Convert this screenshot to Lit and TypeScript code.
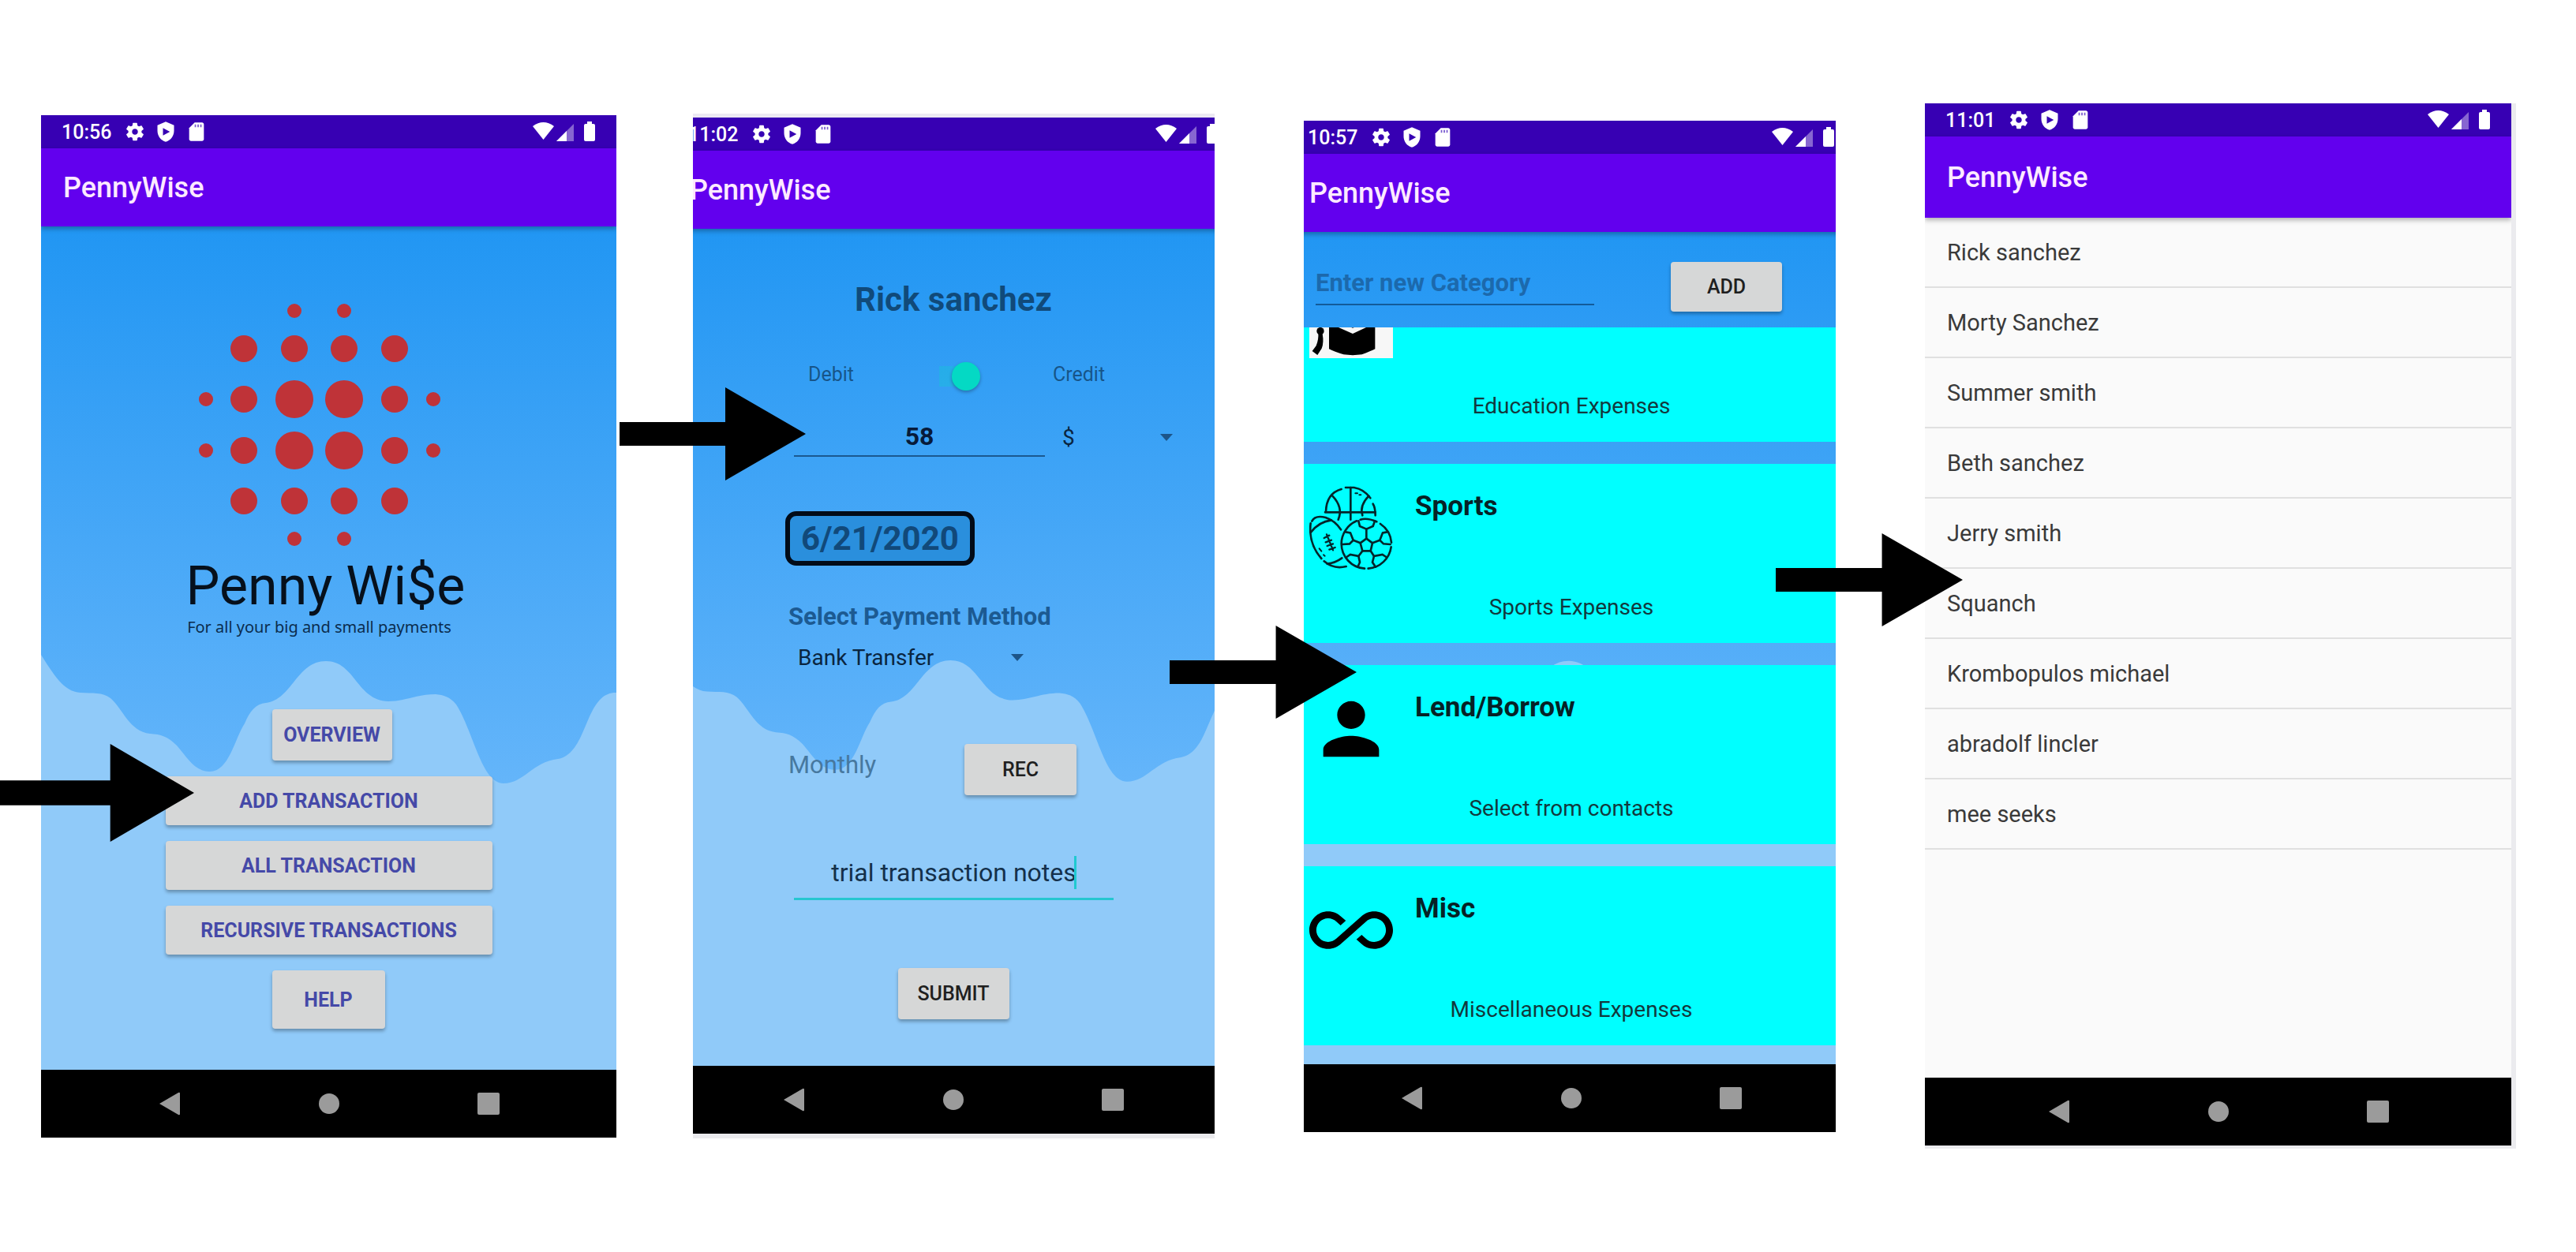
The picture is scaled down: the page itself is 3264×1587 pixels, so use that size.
import { LitElement, html, css, svg } from "lit";
import { customElement, property } from "lit/decorators.js";

interface Category {
  title: string;
  note: string;
  icon: unknown;
}

const educationIcon = html`<svg class="icon cap" viewBox="0 0 318 243" aria-hidden="true">
  <rect width="318" height="243" fill="#f7f7f7" />
  <path d="M165 15 310 72 165 128 20 72Z" />
  <path d="M75 110 165 150 250 110V208Q235 216 200 229Q165 234 130 229Q95 218 75 208Z" />
  <path d="M40 72h4v58h-4z" />
  <circle cx="42" cy="140" r="14" />
  <path d="M34 148 50 150Q56 185 47 206L31 231 11 216 26 196Q36 172 34 148Z" />
</svg>`;

const sportsIcon = html`<svg class="icon" viewBox="30 30 318 318" fill="none" stroke="#04262b" stroke-width="8" stroke-linecap="round" aria-hidden="true">
  <path d="M93 128Q95 58 152 42M168 36H200Q238 42 262 76M272 98Q281 112 281 142" />
  <path d="M90 130H281M187 36V158" />
  <path d="M118 68Q160 112 140 158M256 68Q220 105 232 142" />
  <path d="M205 58h8M220 64h6" stroke-width="6" />
  <path d="M152 250A95 95 0 0 1 210 163M224 158Q250 150 286 166M300 174A95 95 0 0 1 342 245M341 262A95 95 0 0 1 254 344M240 344A95 95 0 0 1 152 250" />
  <path d="M247 230 270 247 263 277H232L224 247Z" />
  <path d="M247 230V194M224 247 197 236M270 247 298 236M232 277 217 297M263 277 276 297" />
  <path d="M217 163 222 183 247 194 272 183 279 163" />
  <path d="M168 205 186 208 197 236 183 250 156 252M326 205 309 208 298 236 312 250 338 252" />
  <path d="M172 300 186 291 217 297 222 320 214 338M322 300 308 291 276 297 270 320 282 338" />
  <path d="M40 164Q52 140 92 150Q128 162 150 196M35 172Q26 250 76 306M86 316Q122 348 170 336" />
  <path d="M36 206Q66 166 114 160M98 326Q130 322 154 304" />
  <path d="M96 214 120 274M86 228 106 218M92 244 114 236M98 258 120 250M106 272 128 264" stroke-width="7" />
  <path d="M68 268l8 10M84 292l5 4" stroke-width="6" />
</svg>`;

const personIcon = html`<svg class="icon" viewBox="0 0 24 24" aria-hidden="true">
  <path d="M12 12c2.21 0 4-1.79 4-4s-1.79-4-4-4-4 1.79-4 4 1.79 4 4 4zm0 2c-2.67 0-8 1.34-8 4v2h16v-2c0-2.66-5.33-4-8-4z" />
</svg>`;

const infinityIcon = html`<svg class="icon" viewBox="0 0 24 24" aria-hidden="true">
  <path d="M18.6 6.62c-1.44 0-2.8.56-3.77 1.53L12 10.66 10.48 12h.01L7.8 14.39c-.64.64-1.49.99-2.4.99-1.87 0-3.39-1.51-3.39-3.38S3.53 8.62 5.4 8.62c.91 0 1.76.35 2.44 1.03l1.13 1 1.51-1.34L9.22 8.2C8.2 7.18 6.84 6.62 5.4 6.62 2.42 6.62 0 9.04 0 12s2.42 5.38 5.4 5.38c1.44 0 2.8-.56 3.77-1.53l2.83-2.5.01.01L13.52 12h-.01l2.69-2.39c.64-.64 1.49-.99 2.4-.99 1.87 0 3.39 1.51 3.39 3.38s-1.52 3.38-3.39 3.38c-.9 0-1.76-.35-2.44-1.03l-1.14-1.01-1.51 1.34 1.27 1.12c1.02 1.01 2.37 1.57 3.82 1.57 2.98 0 5.4-2.41 5.4-5.38s-2.42-5.37-5.4-5.37z" />
</svg>`;

const categories: Category[] = [
  { title: "", note: "Education Expenses", icon: educationIcon },
  { title: "Sports", note: "Sports Expenses", icon: sportsIcon },
  { title: "Lend/Borrow", note: "Select from contacts", icon: personIcon },
  { title: "Misc", note: "Miscellaneous Expenses", icon: infinityIcon },
];

const contacts = [
  "Rick sanchez",
  "Morty Sanchez",
  "Summer smith",
  "Beth sanchez",
  "Jerry smith",
  "Squanch",
  "Krombopulos michael",
  "abradolf lincler",
  "mee seeks",
];

/* Dots of the brand mark: x, y, radius. */
const dots: [number, number, number][] = [
  [373, 394, 9], [436, 394, 9],
  [309, 442, 17], [373, 442, 17], [436, 442, 17], [500, 442, 17],
  [261, 506, 9], [309, 506, 17], [373, 506, 24], [436, 506, 24], [500, 506, 17], [549, 506, 9],
  [261, 571, 9], [309, 571, 17], [373, 571, 24], [436, 571, 24], [500, 571, 17], [549, 571, 9],
  [309, 635, 17], [373, 635, 17], [436, 635, 17], [500, 635, 17],
  [373, 683, 9], [436, 683, 9],
];

/* Phone chrome: status bar, app bar, slotted screen and navigation bar. */
@customElement("phone-frame")
export class PhoneFrame extends LitElement {
  @property() time = "";
  @property({ type: Boolean }) wave = false;

  static styles = css`
    :host {
      display: block;
      overflow: hidden;
      font-family: Roboto, "Liberation Sans", sans-serif;
    }
    .device {
      margin: 0 var(--crop-right, 0) 0 var(--crop-left, 0);
    }
    .status {
      display: flex;
      align-items: center;
      gap: 11px;
      height: 42px;
      padding: 0 26px;
      background: #3700b3;
      color: #fff;
      font-size: 25px;
      font-weight: 500;
    }
    .time {
      width: 68px;
    }
    .status-icon {
      width: 28px;
      height: 28px;
      fill: #fff;
    }
    .radio {
      width: 80px;
      height: 26px;
      margin-left: auto;
      fill: #fff;
    }
    .bar {
      position: relative;
      z-index: 1;
      display: flex;
      align-items: center;
      height: var(--bar-height, 99px);
      padding: 0 28px;
      background: #6200ee;
      color: #fdeaff;
      box-shadow: 0 3px 6px rgba(0, 0, 0, 0.3);
    }
    .title {
      margin: 0;
      font-size: 36px;
      font-weight: 500;
    }
    .screen {
      position: relative;
      background: #fafafa;
    }
    .screen.sky {
      background: linear-gradient(#2196f3, #64b5fa 66%);
    }
    .wave {
      position: absolute;
      inset: 0;
      width: 100%;
      height: 100%;
    }
    .content {
      position: relative;
    }
    .nav {
      display: grid;
      grid-template-columns: repeat(3, 202px);
      justify-content: center;
      justify-items: center;
      align-items: center;
      height: 86px;
      background: #000;
    }
    .nav-button {
      display: flex;
      padding: 8px;
      border: 0;
      background: none;
    }
    .nav-icon {
      width: 30px;
      height: 30px;
      fill: #9b9b9b;
    }
  `;

  render() {
    return html`
      <div class="device">
        <div class="status">
          <span class="time">${this.time}</span>
          <svg class="status-icon" viewBox="0 0 24 24" aria-hidden="true">
            <path d="M19.14 12.94c.04-.3.06-.61.06-.94 0-.32-.02-.64-.07-.94l2.03-1.58c.18-.14.23-.41.12-.61l-1.92-3.32c-.12-.22-.37-.29-.59-.22l-2.39.96c-.5-.38-1.03-.7-1.62-.94l-.36-2.54c-.04-.24-.24-.41-.48-.41h-3.84c-.24 0-.43.17-.47.41l-.36 2.54c-.59.24-1.13.57-1.62.94l-2.39-.96c-.22-.08-.47 0-.59.22L2.74 8.87c-.12.21-.08.47.12.61l2.03 1.58c-.05.3-.09.63-.09.94s.02.64.07.94l-2.03 1.58c-.18.14-.23.41-.12.61l1.92 3.32c.12.22.37.29.59.22l2.39-.96c.5.38 1.03.7 1.62.94l.36 2.54c.05.24.24.41.48.41h3.84c.24 0 .44-.17.47-.41l.36-2.54c.59-.24 1.13-.56 1.62-.94l2.39.96c.22.08.47 0 .59-.22l1.92-3.32c.12-.22.07-.47-.12-.61l-2.01-1.58zM12 15.2c-1.77 0-3.2-1.43-3.2-3.2s1.43-3.2 3.2-3.2 3.2 1.43 3.2 3.2-1.43 3.2-3.2 3.2z" />
          </svg>
          <svg class="status-icon" viewBox="0 0 24 24" aria-hidden="true">
            <path fill-rule="evenodd" d="M12 1 3 5v6c0 5.55 3.84 10.74 9 12 5.16-1.26 9-6.45 9-12V5zM9 8l7.500 4L9 16z" />
          </svg>
          <svg class="status-icon" viewBox="0 0 24 24" aria-hidden="true">
            <path d="M18 2h-8L4 8v12c0 1.100.9 2 2 2h12c1.100 0 2-.9 2-2V4c0-1.100-.9-2-2-2z" />
            <path d="M10 4h1.500v3H10zM13 4h1.500v3H13zM16 4h1.500v3H16z" fill="#7a5bd0" />
          </svg>
          <svg class="radio" viewBox="0 0 80 26" aria-hidden="true">
            <path d="M0 6Q13.500-4 27 6L13.500 23Z" />
            <path d="M30 25 52 3V25Z" opacity="0.4" />
            <path d="M30 25 43 12V25Z" />
            <rect x="69" width="6" height="5" />
            <rect x="65" y="3" width="14" height="22" rx="2" />
          </svg>
        </div>
        <header class="bar"><h2 class="title">PennyWise</h2></header>
        <div class="screen ${this.wave ? "sky" : ""}">
          ${this.wave
            ? html`<svg class="wave" viewBox="0 0 729 1069" preserveAspectRatio="none" aria-hidden="true">
                <path
                  fill="#90caf9"
                  d="M0 543C15 566 28 590 50 591C65 592 78 590 88 598C104 612 112 640 138 643C152 644 160 646 172 658C186 674 194 690 213 691C238 692 245 650 258 630C265 614 272 605 285 604C318 600 324 551 361 551C398 551 400 601 440 602C462 602 475 593 500 593C510 594 518 596 526 606C548 640 558 706 586 706C612 706 622 679 655 675C694 668 688 590 729 591V1069H0Z"
                />
              </svg>`
            : null}
          <div class="content"><slot></slot></div>
        </div>
        <nav class="nav">
          <button class="nav-button" aria-label="Back">
            <svg class="nav-icon" viewBox="0 0 30 30"><path d="M2 15 26 1Q28 0 28 2V28Q28 30 26 29Z" /></svg>
          </button>
          <button class="nav-button" aria-label="Home">
            <svg class="nav-icon" viewBox="0 0 30 30"><circle cx="15" cy="15" r="13" /></svg>
          </button>
          <button class="nav-button" aria-label="Recent apps">
            <svg class="nav-icon" viewBox="0 0 30 30"><rect x="1" y="1" width="28" height="28" rx="2" /></svg>
          </button>
        </nav>
      </div>
    `;
  }
}

@customElement("app-root")
export class AppRoot extends LitElement {
  static styles = css`
    :host {
      display: block;
      min-height: 100vh;
      overflow: hidden;
      background: #fff;
      font-family: Roboto, "Liberation Sans", sans-serif;
    }
    * {
      box-sizing: border-box;
    }
    button,
    input,
    select {
      font-family: inherit;
    }
    .board {
      display: grid;
      grid-template-columns:
        minmax(0, 52fr) minmax(0, 729fr) minmax(0, 97fr) minmax(0, 661fr) minmax(0, 113fr)
        minmax(0, 674fr) minmax(0, 113fr) minmax(0, 743fr) minmax(0, 82fr);
      align-items: start;
      padding-bottom: 130px;
    }
    .step {
      position: relative;
    }
    .step.home {
      grid-column: 2;
      margin-top: 146px;
    }
    .step.entry {
      grid-column: 4;
      margin-top: 144px;
      border-top: 5px solid #ece9f3;
      border-bottom: 6px solid #ebebee;
      --crop-left: -32px;
      --crop-right: -31px;
    }
    .step.category {
      grid-column: 6;
      margin-top: 153px;
      --crop-left: -21px;
      --crop-right: -25px;
    }
    .step.people {
      grid-column: 8;
      margin-top: 131px;
      border-right: 6px solid #ebebee;
      border-bottom: 4px solid #ebebee;
      margin-right: -6px;
      --bar-height: 103px;
    }

    /* Arrows lie over the screens they connect. */
    .arrow {
      position: absolute;
      z-index: 2;
    }
    .home .arrow {
      left: -52px;
      top: 797px;
      width: 246px;
      height: 124px;
    }
    .entry .arrow {
      left: -93px;
      top: 342px;
      width: 236px;
      height: 118px;
    }
    .category .arrow {
      left: -170px;
      top: 640px;
      width: 237px;
      height: 118px;
    }
    .people .arrow {
      left: -189px;
      top: 545px;
      width: 237px;
      height: 118px;
    }

    .raised {
      border: 0;
      border-radius: 4px;
      background: #d6d7d7;
      box-shadow: 0 3px 4px rgba(0, 0, 0, 0.3);
      color: #1f1f1f;
      font-size: 25px;
      font-weight: 500;
      text-align: center;
      padding: 0;
    }

    /* Home menu */
    .menu {
      display: flex;
      flex-direction: column;
      align-items: center;
      padding: 97px 0 52px;
    }
    .mark {
      width: 310px;
      height: 310px;
      margin-right: 24px;
      fill: #bf3338;
    }
    .brand {
      margin: 12px 8px 0 0;
      color: #06101c;
      font-size: 68px;
      font-weight: 400;
      line-height: 74px;
    }
    .tagline {
      margin: 0 24px 0 0;
      color: #0b2c4d;
      font-family: "Noto Sans", sans-serif;
      font-size: 20px;
      line-height: 30px;
    }
    .actions {
      display: grid;
      gap: 20px;
      width: 414px;
      margin-top: 89px;
    }
    .actions .raised {
      height: 62px;
      color: #4549a8;
      font-weight: 700;
    }
    .actions .overview {
      width: 152px;
      height: 65px;
      margin-left: 135px;
    }
    .actions .help {
      width: 143px;
      height: 74px;
      margin-left: 135px;
    }

    /* Transaction form */
    .form {
      display: flex;
      flex-direction: column;
      padding: 66px 149px 59px;
    }
    .payee {
      margin: 0;
      color: rgba(0, 20, 40, 0.6);
      font-size: 42px;
      font-weight: 700;
      line-height: 48px;
      text-align: center;
    }
    .kind {
      display: flex;
      align-items: center;
      height: 40px;
      margin: 50px 0 0 29px;
      color: rgba(0, 20, 40, 0.54);
      font-size: 25px;
    }
    .kind-name {
      width: 158px;
    }
    .toggle {
      position: relative;
      width: 56px;
      height: 36px;
      margin: 6px 92px 0 4px;
      appearance: none;
      background: linear-gradient(rgba(3, 218, 197, 0.25), rgba(3, 218, 197, 0.25)) 4px center / 46px 26px no-repeat;
    }
    .toggle::before {
      content: "";
      position: absolute;
      right: 0;
      width: 36px;
      height: 36px;
      border-radius: 50%;
      background: #04d9c4;
      box-shadow: 0 2px 4px rgba(0, 0, 0, 0.3);
    }
    .amount-row {
      display: flex;
      gap: 22px;
      height: 50px;
      margin: 35px 0 0 11px;
    }
    .amount {
      flex: none;
      width: 318px;
      padding: 0;
      border: 0;
      border-bottom: 2px solid rgba(0, 30, 60, 0.55);
      background: none;
      color: #071b3a;
      font-size: 32px;
      font-weight: 700;
      text-align: center;
    }
    .picker {
      display: grid;
      flex: none;
      align-items: center;
    }
    .picker > * {
      grid-area: 1 / 1;
    }
    .select {
      width: 100%;
      height: 100%;
      padding: 0;
      border: 0;
      appearance: none;
      background: none;
      color: #0a2540;
      font-size: 28px;
    }
    .caret {
      justify-self: end;
      width: 16px;
      height: 9px;
      fill: #1d5589;
      pointer-events: none;
    }
    .currency {
      width: 140px;
    }
    .date {
      align-self: flex-start;
      height: 69px;
      margin-top: 69px;
      padding: 0 14px;
      border: 6px solid #020b18;
      border-radius: 14px;
      background: #2a8fdd;
      color: #11497a;
      font-size: 42px;
      font-weight: 700;
    }
    .caption {
      margin: 45px 0 0 4px;
      color: #1c5a92;
      font-size: 31px;
      font-weight: 700;
      line-height: 40px;
      white-space: nowrap;
    }
    .method {
      width: 286px;
      height: 40px;
      margin: 11px 0 0 16px;
    }
    .repeat {
      display: flex;
      align-items: flex-start;
      justify-content: space-between;
      margin: 90px 57px 0 4px;
      color: #47789f;
      font-size: 31px;
      line-height: 54px;
    }
    .repeat .raised {
      width: 142px;
      height: 65px;
    }
    .notes-box {
      position: relative;
      margin: 66px 10px 0 11px;
    }
    .notes {
      display: block;
      width: 100%;
      height: 67px;
      padding: 0;
      border: 0;
      border-bottom: 3px solid #26c6d0;
      background: none;
      color: #14304a;
      font-size: 32px;
      text-align: center;
    }
    .cursor {
      position: absolute;
      right: 47px;
      top: 11px;
      width: 3px;
      height: 42px;
      background: #1fc9d0;
    }
    .submit {
      align-self: center;
      width: 141px;
      height: 65px;
      margin-top: 86px;
    }

    /* Categories */
    .new-category {
      display: flex;
      align-items: flex-start;
      justify-content: space-between;
      height: 121px;
      padding: 38px 93px 0 36px;
    }
    .category-name {
      width: 353px;
      height: 55px;
      padding: 0;
      border: 0;
      border-bottom: 2px solid rgba(0, 40, 80, 0.55);
      background: none;
      font-size: 31px;
      font-weight: 700;
    }
    .category-name::placeholder {
      color: #1c69ac;
      opacity: 1;
    }
    .new-category .raised {
      width: 141px;
      height: 63px;
    }
    .scroller {
      overflow: hidden;
    }
    .cards {
      display: grid;
      gap: 28px;
      margin: -82px 0 0;
      padding: 0 0 24px;
      list-style: none;
    }
    .card {
      display: grid;
      grid-template-columns: 106px 1fr;
      column-gap: 28px;
      align-content: start;
      height: 227px;
      padding: 28px 28px 0;
      background: #00ffff;
    }
    .icon {
      width: 106px;
      height: 106px;
    }
    .icon.cap {
      height: 81px;
      margin: 12px 0 13px;
    }
    .card-title {
      margin: 5px 0 0;
      color: #062226;
      font-size: 35px;
      font-weight: 700;
      line-height: 42px;
    }
    .card-note {
      grid-column: 1 / -1;
      margin: 30px 0 0;
      color: #12393d;
      font-size: 28px;
      line-height: 36px;
      text-align: center;
    }

    /* Contacts */
    .contacts {
      margin: 0;
      padding: 0 0 289px;
      list-style: none;
    }
    .contact {
      display: flex;
      align-items: center;
      height: 89px;
      padding: 0 28px;
      border-bottom: 2px solid #e0e0e0;
      color: #3a3a3a;
      font-size: 29px;
    }
  `;

  private arrow(head: number, thick: number) {
    return html`<svg class="arrow" viewBox="0 0 236 118" preserveAspectRatio="none" aria-hidden="true">
      <path d="M0 ${59 - thick / 2}H${head}V0L236 59 ${head} 118V${59 + thick / 2}H0Z" />
    </svg>`;
  }

  private caret() {
    return html`<svg class="caret" viewBox="0 0 16 9" aria-hidden="true"><path d="M0 0H16L8 9Z" /></svg>`;
  }

  render() {
    return html`
      <main class="board">
        <section class="step home">
          ${this.arrow(134, 30)}
          <phone-frame time="10:56" wave>
            <div class="menu">
              <svg class="mark" viewBox="250 384 310 310" aria-hidden="true">
                ${dots.map(([x, y, r]) => svg`<circle cx=${x} cy=${y} r=${r} />`)}
              </svg>
              <h1 class="brand">Penny Wi$e</h1>
              <p class="tagline">For all your big and small payments</p>
              <div class="actions">
                <button class="raised overview">OVERVIEW</button>
                <button class="raised">ADD TRANSACTION</button>
                <button class="raised">ALL TRANSACTION</button>
                <button class="raised">RECURSIVE TRANSACTIONS</button>
                <button class="raised help">HELP</button>
              </div>
            </div>
          </phone-frame>
        </section>

        <section class="step entry">
          ${this.arrow(134, 30)}
          <phone-frame time="11:02" wave>
            <form class="form">
              <h3 class="payee">Rick sanchez</h3>
              <div class="kind">
                <label class="kind-name" for="kind">Debit</label>
                <input class="toggle" id="kind" type="checkbox" role="switch" checked />
                <label for="kind">Credit</label>
              </div>
              <div class="amount-row">
                <input class="amount" type="text" aria-label="Amount" value="58" />
                <div class="picker currency">
                  <select class="select" aria-label="Currency"><option>$</option></select>
                  ${this.caret()}
                </div>
              </div>
              <button class="date" type="button">6/21/2020</button>
              <label class="caption" for="method">Select Payment Method</label>
              <div class="picker method">
                <select class="select" id="method"><option>Bank Transfer</option></select>
                ${this.caret()}
              </div>
              <div class="repeat">
                <span>Monthly</span>
                <button class="raised" type="button">REC</button>
              </div>
              <div class="notes-box">
                <input class="notes" type="text" aria-label="Notes" value="trial transaction notes" />
                <span class="cursor"></span>
              </div>
              <button class="raised submit" type="button">SUBMIT</button>
            </form>
          </phone-frame>
        </section>

        <section class="step category">
          ${this.arrow(134, 30)}
          <phone-frame time="10:57" wave>
            <div class="new-category">
              <input class="category-name" type="text" aria-label="New category" placeholder="Enter new Category" />
              <button class="raised">ADD</button>
            </div>
            <div class="scroller">
              <ul class="cards">
                ${categories.map(
                  (c) => html`<li class="card">
                    ${c.icon}
                    <h3 class="card-title">${c.title}</h3>
                    <p class="card-note">${c.note}</p>
                  </li>`
                )}
              </ul>
            </div>
          </phone-frame>
        </section>

        <section class="step people">
          ${this.arrow(134, 30)}
          <phone-frame time="11:01">
            <ul class="contacts">
              ${contacts.map((name) => html`<li class="contact">${name}</li>`)}
            </ul>
          </phone-frame>
        </section>
      </main>
    `;
  }
}
